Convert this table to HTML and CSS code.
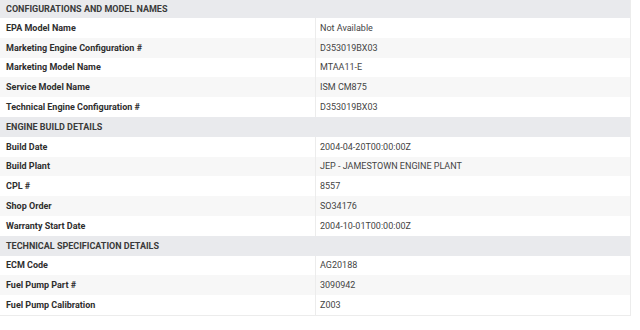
FILE: index.html
```html
<!DOCTYPE html>
<html>
<head>
<meta charset="utf-8">
<link rel="stylesheet" href="styles.css">
</head>
<body>
<div class="specs">
  <div class="section">CONFIGURATIONS AND MODEL NAMES</div>
  <div class="row"><div class="label">EPA Model Name</div><div class="value">Not Available</div></div>
  <div class="row"><div class="label">Marketing Engine Configuration #</div><div class="value">D353019BX03</div></div>
  <div class="row"><div class="label">Marketing Model Name</div><div class="value">MTAA11-E</div></div>
  <div class="row"><div class="label">Service Model Name</div><div class="value">ISM CM875</div></div>
  <div class="row"><div class="label">Technical Engine Configuration #</div><div class="value">D353019BX03</div></div>
  <div class="section">ENGINE BUILD DETAILS</div>
  <div class="row"><div class="label">Build Date</div><div class="value">2004-04-20T00:00:00Z</div></div>
  <div class="row"><div class="label">Build Plant</div><div class="value">JEP - JAMESTOWN ENGINE PLANT</div></div>
  <div class="row"><div class="label">CPL #</div><div class="value">8557</div></div>
  <div class="row"><div class="label">Shop Order</div><div class="value">SO34176</div></div>
  <div class="row"><div class="label">Warranty Start Date</div><div class="value">2004-10-01T00:00:00Z</div></div>
  <div class="section">TECHNICAL SPECIFICATION DETAILS</div>
  <div class="row"><div class="label">ECM Code</div><div class="value">AG20188</div></div>
  <div class="row"><div class="label">Fuel Pump Part #</div><div class="value">3090942</div></div>
  <div class="row"><div class="label">Fuel Pump Calibration</div><div class="value">Z003</div></div>
</div>
</body>
</html>
```
FILE: styles.css
```css
html, body {
  margin: 0;
  padding: 0;
  background: #ffffff;
}
body {
  font-family: Roboto, "Liberation Sans", sans-serif;
  font-size: 9px;
  color: #333333;
}
.specs {
  width: 630px;
  border-right: 1px solid #ececec;
  border-bottom: 1px solid #ececec;
  display: flex;
  flex-direction: column;
}
.section {
  height: 19.8px;
  display: flex;
  align-items: center;
  padding-left: 6px;
  background: #e9eaed;
  font-weight: 700;
  color: #3a3a3a;
}
.section:first-child {
  height: 18px;
}
.row {
  height: 19.8px;
  display: grid;
  grid-template-columns: 316px 1fr;
  background: #ffffff;
}
.section + .row + .row,
.section + .row + .row + .row + .row {
  background: #f7f7f7;
}
.label {
  display: flex;
  align-items: center;
  padding-left: 6px;
  font-weight: 700;
  color: #2e2e2e;
  border-right: 1px solid #ececec;
}
.value {
  display: flex;
  align-items: center;
  padding-left: 4px;
  color: #444444;
}
```
